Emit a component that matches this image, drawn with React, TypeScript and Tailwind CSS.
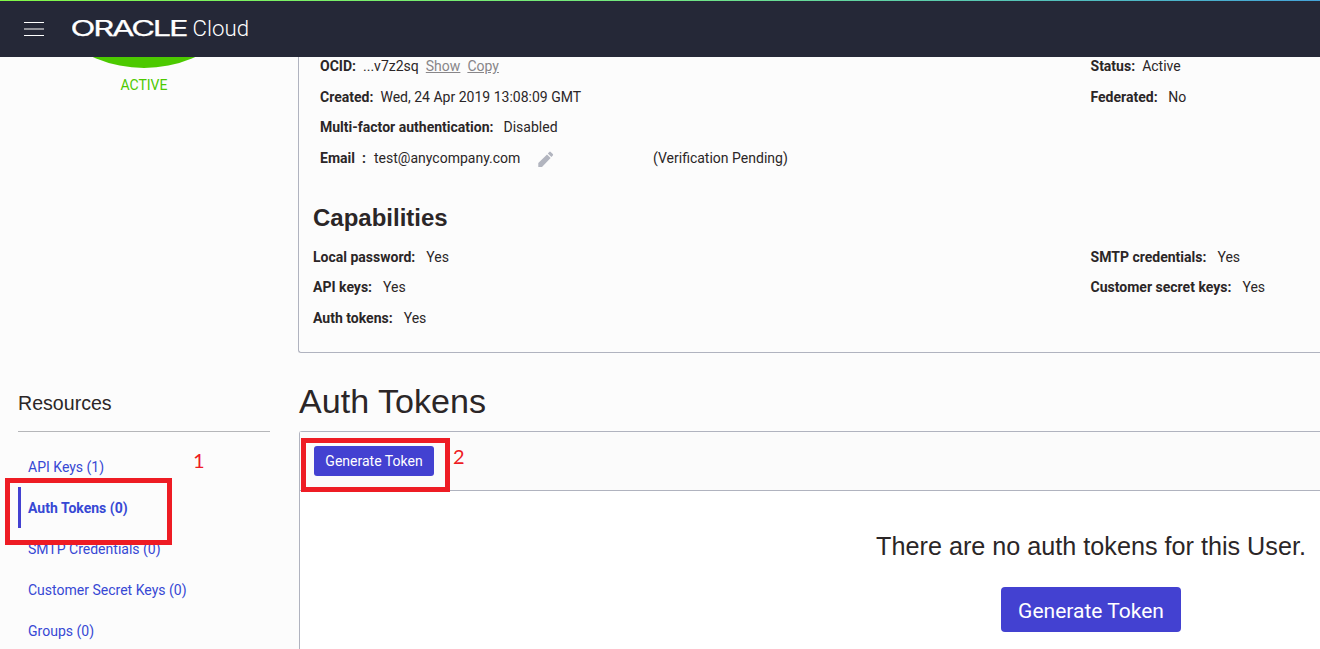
import React from "react";

function Field({ label, value, gap = "ml-[11px]" }: { label: string; value: string; gap?: string }) {
  return (
    <div className="flex h-[30.6px] items-center whitespace-nowrap">
      <span className="font-bold">{label}</span>
      <span className={gap}>{value}</span>
    </div>
  );
}

function Header() {
  return (
    <header className="relative z-10 flex h-[57px] shrink-0 flex-col bg-[#252837]">
      <div className="h-px shrink-0 bg-linear-to-r from-[#82f846] via-[#72e780] to-[#45a3d8]" />
      <div className="flex flex-1 items-center pl-6">
        <button className="flex h-[14px] w-5 flex-col justify-between" aria-label="Menu">
          <span className="h-px w-5 bg-white" />
          <span className="h-[2px] w-5 bg-[#919299]" />
          <span className="h-px w-5 bg-white" />
        </button>
        <svg className="ml-7" width="180" height="30" viewBox="0 0 180 30" fill="#fff">
          <text x="-1.5" y="22.3" fontFamily="Inter, sans-serif" fontSize="21" fontWeight="400" letterSpacing="-1.4" textLength="116" lengthAdjust="spacingAndGlyphs" stroke="#fff" strokeWidth="0.25">
            ORACLE
          </text>
          <text x="120.5" y="22.3" fontFamily="Roboto, sans-serif" fontSize="22" fontWeight="300" textLength="56.5" lengthAdjust="spacingAndGlyphs">
            Cloud
          </text>
        </svg>
      </div>
    </header>
  );
}

const links = ["SMTP Credentials (0)", "Customer Secret Keys (0)", "Groups (0)"];

function Sidebar() {
  return (
    <aside className="flex w-[298px] shrink-0 flex-col pl-[18px]">
      <div className="flex h-[324px] w-[252px] flex-col items-center">
        <svg className="shrink-0" width="160" height="11" viewBox="0 0 160 11">
          <circle cx="80" cy="-114" r="125" fill="#4cc900" />
        </svg>
        <div className="mt-[7px] text-[14px] leading-5 text-[#4cc900]">ACTIVE</div>
      </div>
      <h2 className="flex h-[51px] w-[252px] items-start border-b border-[#b5b6b9] pt-[7px] font-['Liberation_Sans',sans-serif] text-[19.6px] leading-[30px]">
        Resources
      </h2>
      <nav className="flex flex-col pt-[14px] text-[14.03px] text-[#3748d4]">
        <a className="flex h-[41px] items-center pt-[2px] pl-[10px]">API Keys (1)</a>
        <a className="flex h-[41px] items-center border-l-[3px] border-[#4341d1] pt-[2px] pl-[7px] font-bold">Auth Tokens (0)</a>
        {links.map((l) => (
          <a key={l} className="flex h-[41px] items-center pt-[2px] pl-[10px]">{l}</a>
        ))}
      </nav>
    </aside>
  );
}

function Details() {
  return (
    <section className="flex h-[296px] flex-col rounded-bl-[3px] border-b border-l border-[#b0b3bf] text-[14.03px]">
      <div className="-mt-[5.6px] flex">
        <div className="flex w-[791.5px] shrink-0 flex-col pl-[21px]">
          <div className="flex h-[30.6px] items-center whitespace-nowrap">
            <span className="font-bold">OCID:</span>
            <span className="ml-[7px]">...v7z2sq</span>
            <a className="ml-[7px] text-[#888689] underline">Show</a>
            <a className="ml-[7px] text-[#888689] underline">Copy</a>
          </div>
          <Field label="Created:" value="Wed, 24 Apr 2019 13:08:09 GMT" gap="ml-[7px]" />
          <Field label="Multi-factor authentication:" value="Disabled" gap="ml-[10px]" />
          <div className="flex h-[30.6px] items-center whitespace-nowrap">
            <span className="w-[42px] font-bold">Email</span>
            <span className="w-[12px] font-bold">:</span>
            <span className="w-[162.5px]">test@anycompany.com</span>
            <svg className="mt-[3px]" width="17" height="17" viewBox="0 0 17 17" fill="#b2b5bf">
              <path d="M1.3 16v-4L10 3.4l3.6 3.6L5 15.9zM10.8 2.5l1.5-1.6q.7-.6 1.4 0l2.1 2.2q.7.7 0 1.4l-1.4 1.6z" />
            </svg>
            <span className="ml-[99.5px]">(Verification Pending)</span>
          </div>
        </div>
        <div className="flex flex-col">
          <Field label="Status:" value="Active" gap="ml-[7px]" />
          <Field label="Federated:" value="No" gap="ml-[10.5px]" />
        </div>
      </div>
      <h2 className="mt-[29.6px] pl-[14px] font-['Liberation_Sans',sans-serif] text-[24px] leading-[30px] font-bold">Capabilities</h2>
      <div className="mt-[8.5px] flex">
        <div className="flex w-[791.5px] shrink-0 flex-col pl-[14px]">
          <Field label="Local password:" value="Yes" />
          <Field label="API keys:" value="Yes" />
          <Field label="Auth tokens:" value="Yes" />
        </div>
        <div className="flex flex-col">
          <Field label="SMTP credentials:" value="Yes" />
          <Field label="Customer secret keys:" value="Yes" />
        </div>
      </div>
    </section>
  );
}

function Tokens() {
  return (
    <section className="flex flex-1 flex-col pl-px">
      <h1 className="flex h-[78px] items-end pb-[10px] font-['Liberation_Sans',sans-serif] text-[34.1px] leading-[40px]">Auth Tokens</h1>
      <div className="flex flex-1 flex-col rounded-tl-[3px] border-t border-l border-[#b0b3bf] bg-white">
        <div className="flex h-[59px] shrink-0 items-start border-b border-[#b0b3bf] bg-[#fbfbfb] pt-[14px] pl-[14px]">
          <button className="h-[30px] w-[120px] rounded-[3px] bg-[#4341d1] pt-px text-[14.03px] text-white">Generate Token</button>
        </div>
        <div className="flex w-[1582px] flex-col items-center pt-[37px]">
          <p className="font-['Liberation_Sans',sans-serif] text-[25.2px] leading-9 whitespace-nowrap">There are no auth tokens for this User.</p>
          <button className="mt-[23px] h-[45px] w-[180px] rounded-[4px] bg-[#4341d1] pt-[5px] text-[21px] text-white">Generate Token</button>
        </div>
      </div>
    </section>
  );
}

export default function App() {
  return (
    <div className="relative flex h-[649px] w-full flex-col overflow-hidden bg-[#fcfcfc] font-[Roboto,sans-serif] text-[#2b2627]">
      <Header />
      <div className="flex flex-1">
        <Sidebar />
        <main className="flex min-w-0 flex-1 flex-col overflow-hidden">
          <Details />
          <Tokens />
        </main>
      </div>
      <div className="absolute top-[478px] left-[5px] h-[67px] w-[167px] border-[5px] border-[#ee1c24]" />
      <div className="absolute top-[438px] left-[301px] h-[54px] w-[149px] border-[5px] border-[#ee1c24]" />
      <span className="absolute top-[448px] left-[193px] font-[Lato,sans-serif] text-[20px] leading-6 text-[#ee1c24]">1</span>
      <span className="absolute top-[444px] left-[453px] font-[Lato,sans-serif] text-[20px] leading-6 text-[#ee1c24]">2</span>
    </div>
  );
}
